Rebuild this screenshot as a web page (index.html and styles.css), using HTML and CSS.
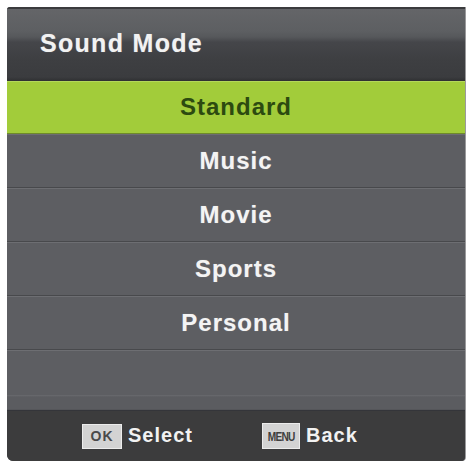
FILE: index.html
```html
<!DOCTYPE html>
<html>
<head>
<meta charset="utf-8">
<link rel="stylesheet" href="styles.css">
</head>
<body>
<div class="panel">
  <div class="header"><span class="title">Sound Mode</span></div>
  <div class="list">
    <div class="row selected">Standard</div>
    <div class="row">Music</div>
    <div class="row">Movie</div>
    <div class="row">Sports</div>
    <div class="row">Personal</div>
    <div class="row empty"></div>
  </div>
  <div class="footer">
    <div class="hint">
      <span class="key key-ok">OK</span>
      <span class="hint-label">Select</span>
    </div>
    <div class="hint">
      <span class="key key-menu"><span class="menu-text">MENU</span></span>
      <span class="hint-label">Back</span>
    </div>
  </div>
</div>
</body>
</html>
```
FILE: styles.css
```css
html, body {
  margin: 0;
  padding: 0;
  background: #ffffff;
}
body {
  font-family: "Liberation Sans", Arial, sans-serif;
  font-weight: bold;
}
.panel {
  margin: 7px 3px 0 7px;
  width: 458px;
  background: #5d5e62;
  border-radius: 3px 0 4px 6px;
  overflow: hidden;
  box-shadow: 1px 0 0 #9a9a9c;
}
.header {
  height: 53px;
  padding: 19px 0 0 33px;
  border-top: 2px solid #3a3b3d;
  background: linear-gradient(to bottom,
    #646568 0px, #5d5f62 22px, #56585b 28px,
    #45464a 33px, #3e3f42 50px, #3b3c3f 68px, #2f3032 72px);
}
.title {
  color: #f2f2f2;
  font-size: 25px;
  line-height: 30px;
  letter-spacing: 1.3px;
  text-shadow: 0 0 1px rgba(255,255,255,0.4);
}
.list {
  display: flex;
  flex-direction: column;
}
.row {
  height: 53px;
  display: flex;
  align-items: center;
  justify-content: center;
  color: #f4f4f4;
  font-size: 24px;
  letter-spacing: 1px;
  background: #5d5e62;
  border-bottom: 1px solid #48494c;
  box-shadow: inset 0 1px 0 #6d6e72;
  text-shadow: 0 0 1px rgba(255,255,255,0.35);
}
.row.selected {
  height: 52px;
  background: #a2cc3a;
  color: #2c4a10;
  box-shadow: inset 0 1px 0 #b4d85a;
  border-bottom: 1px solid #6e8a2a;
  text-shadow: none;
}
.row.empty {
  height: 59px;
  border-bottom: 1px solid #55565a;
  background: linear-gradient(to bottom, #5d5e62 0, #5d5e62 45px, #6a6b6f 45px, #5b5c60 47px, #5b5c60 59px);
}
.footer {
  height: 50px;
  background: #3c3c3d;
  border-top: 1px solid #34353a;
  display: flex;
  align-items: center;
  padding-left: 75px;
  gap: 69px;
}
.hint {
  display: flex;
  align-items: center;
  gap: 6px;
}
.hint-label {
  color: #f2f2f2;
  font-size: 20px;
  letter-spacing: 1px;
  padding-bottom: 2px;
}
.key {
  display: flex;
  align-items: center;
  justify-content: center;
  background: #d3d3d3;
  border: 1px solid #ececec;
  color: #4a4a4a;
  box-sizing: border-box;
}
.key-ok {
  width: 40px;
  height: 25px;
  font-size: 14px;
  letter-spacing: 1px;
}
.key-menu {
  width: 38px;
  height: 26px;
  color: #3e3e3e;
}
.menu-text {
  font-size: 13px;
  letter-spacing: -1px;
  display: inline-block;
  transform: scaleX(0.78);
}
```
